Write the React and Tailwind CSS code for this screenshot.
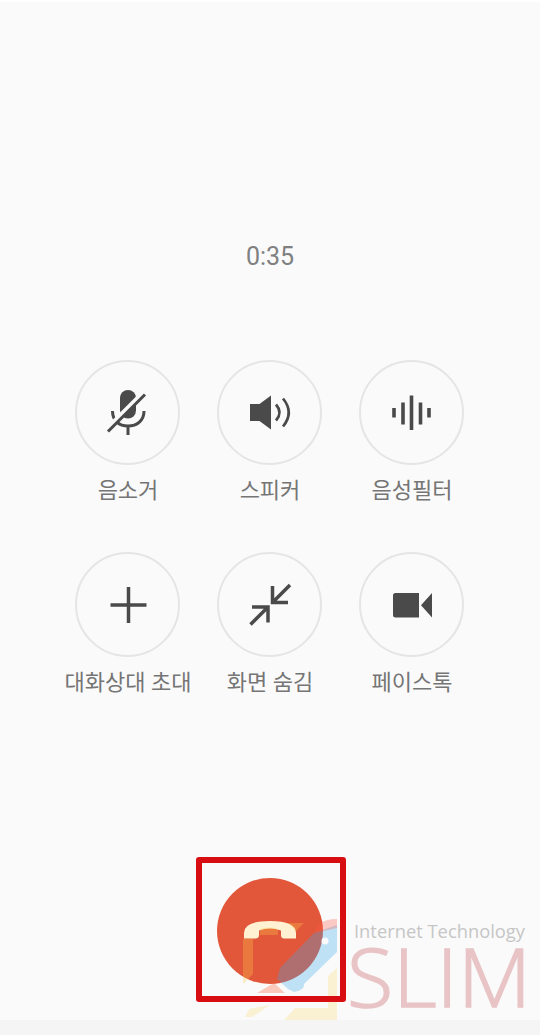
import clsx from "clsx";

function MuteIcon() {
  return (
    <svg className="w-[105px] h-[105px]" viewBox="0 0 105 105" fill="none">
      <rect x="44.5" y="30" width="16" height="28.5" rx="8" fill="#4a4a4a" />
      <path d="M37 51c0 9.5 6.500 15 15.500 15S68.500 60.500 68.500 51M52.500 66v9" stroke="#4a4a4a" strokeWidth="3" />
      <path d="M30.500 69.500 67.500 32.500" stroke="#fafafa" strokeWidth="4" />
      <path d="M32.500 71.500 69.500 34.500" stroke="#4a4a4a" strokeWidth="3" />
    </svg>
  );
}

function SpeakerIcon() {
  return (
    <svg className="w-[105px] h-[105px]" viewBox="0 0 105 105" fill="none">
      <path d="M32.500 44H42L53.500 35.500V69.500L42 61H32.500Z" fill="#4a4a4a" />
      <path d="M58.500 44.500q7 8 0 16M65.500 38.500q11.500 14 0 28" stroke="#4a4a4a" strokeWidth="2.700" />
    </svg>
  );
}

function FilterIcon() {
  return (
    <svg className="w-[105px] h-[105px]" viewBox="0 0 105 105" fill="none">
      <path d="M34.500 48v9.500M43.500 42.500v22M52 35.500v34.500M61 42.500v22M69.500 48v9.500" stroke="#4a4a4a" strokeWidth="3.600" />
    </svg>
  );
}

function PlusIcon() {
  return (
    <svg className="w-[105px] h-[105px]" viewBox="0 0 105 105" fill="none">
      <path d="M35 53h36M53 35v36" stroke="#4a4a4a" strokeWidth="3.500" />
    </svg>
  );
}

function HideIcon() {
  return (
    <svg className="w-[105px] h-[105px]" viewBox="0 0 105 105" fill="none" stroke="#4a4a4a" strokeWidth="3.500">
      <path d="M72.500 33 55 50.500M55 34V50.500H70.500" />
      <path d="M33 72.500 50.500 55M34.500 55H50.500V70.500" />
    </svg>
  );
}

function VideoIcon() {
  return (
    <svg className="w-[105px] h-[105px]" viewBox="0 0 105 105" fill="#4a4a4a">
      <path d="M36 41H59.500V65.500H36q-2.500 0-2.500-2.500V43.500q0-2.500 2.500-2.500ZM61.500 53.200 72.500 41V65.500Z" />
    </svg>
  );
}

const buttons = [
  { label: "음소거", Icon: MuteIcon },
  { label: "스피커", Icon: SpeakerIcon },
  { label: "음성필터", Icon: FilterIcon },
  { label: "대화상대 초대", Icon: PlusIcon },
  { label: "화면 숨김", Icon: HideIcon },
  { label: "페이스톡", Icon: VideoIcon },
];

function CallButton({ label, Icon }) {
  return (
    <button className="flex flex-col items-center">
      <span className="relative w-[105px] h-[105px] rounded-full border-2 border-[#e5e5e5]">
        <span className="absolute -inset-[2px] translate-x-[0.5px]">
          <Icon />
        </span>
      </span>
      <span className="mt-[11px] h-[30px] leading-[30px] pl-px text-[22px] text-[#757575] whitespace-nowrap">
        {label}
      </span>
    </button>
  );
}

function Watermark() {
  return (
    <svg className="absolute left-[240px] top-[908px] w-[300px] h-[125px]" viewBox="240 910 300 125">
      {/* Emblem */}
      <path d="M243 939H253V974L243 984ZM260 929Q270 926 278 929V935H260ZM288 923H304L296 931Z" fill="#f7c948" opacity="0.300" />
      <path d="M328 976 337 968V1020H284L295 1008H328ZM249 1009 270 1005 252 1017H245Z" fill="#f9cf55" opacity="0.240" />
      <path d="M337 925V952L304 984Q305 990 294 992L288 989 277 979 280 968 314 933Z" fill="#38a9ee" opacity="0.300" />
      <path d="M318 924Q326 919 337 919V928L315 933Z" fill="#fc5a45" opacity="0.300" />
      <path d="M274 983 285 993H257Z" fill="#fc5a30" opacity="0.300" />
      <circle cx="325" cy="941" r="3.500" fill="#fafafa" />
      <text x="354" y="938" fontSize="19" fill="#c6c6c6" textLength="171" lengthAdjust="spacingAndGlyphs" className="font-['Open_Sans']">
        Internet Technology
      </text>
      <text x="347" y="1007" fontSize="82" fill="#e9c4c6" stroke="#e9c4c6" strokeWidth="1.500" fontWeight="300" textLength="184" lengthAdjust="spacingAndGlyphs" className="font-['Open_Sans']">
        SLIM
      </text>
    </svg>
  );
}

export default function App() {
  return (
    <div className={clsx("relative flex flex-col w-[540px] h-[1035px] overflow-hidden bg-[#fafafa]", "border-t-2 border-white font-[Roboto,'Noto_Sans_CJK_KR',sans-serif]")}>
      <p className="mt-[238px] h-[34px] text-center text-[25px] leading-[34px] text-[#808080]">0:35</p>

      <div className="mt-[86px] ml-[56.5px] grid grid-cols-[142px_142px_142px] gap-y-[46px]">
        {buttons.map((b) => (
          <CallButton key={b.label} label={b.label} Icon={b.Icon} />
        ))}
      </div>

      {/* End call */}
      <div className="mt-[158px] mx-auto pt-[22px] w-[150px] h-[146px] flex justify-center">
        <button className="w-[106px] h-[106px] rounded-full bg-[#e2573a]">
          <svg className="w-[106px] h-[106px]" viewBox="0 0 106 106">
            <path d="M27 60.500V55Q27 43 53 43T79 55V60.500H66.500Q64 60 64 57V52.500Q53 48.500 42 52.500V57Q42 60 39 60.500Z" fill="#fff1d2" />
          </svg>
        </button>
      </div>

      <div className="mt-auto h-[15px] bg-[#f5f5f5]" />
      <Watermark />
      <div className="absolute left-[196px] top-[855px] w-[150px] h-[145px] rounded-[3px] border-[6px] border-[#d80d12]" />
    </div>
  );
}
